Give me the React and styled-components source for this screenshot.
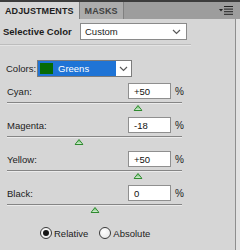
import React from "react";
import styled, { createGlobalStyle } from "styled-components";

const GlobalStyle = createGlobalStyle`
  html, body {
    margin: 0;
    padding: 0;
    background: #d6d6d6;
  }
  body {
    font-family: "Liberation Sans", Arial, sans-serif;
    color: #1c1c1c;
  }
`;

const Panel = styled.div`
  width: 240px;
  height: 250px;
  display: flex;
  flex-direction: column;
  background: #d6d6d6;
  overflow: hidden;
`;

const TabBar = styled.div`
  height: 17px;
  border-top: 2px solid #3c3c3c;
  background: #9d9d9d;
  display: flex;
  align-items: stretch;
`;

const Tab = styled.div`
  display: flex;
  align-items: center;
  padding: 0 5px;
  font-size: 9px;
  font-weight: bold;
  letter-spacing: 0.1px;
  background: ${(p) => (p.$active ? "#d6d6d6" : "#acacac")};
  color: ${(p) => (p.$active ? "#1e1e1e" : "#404040")};
  border-right: 1px solid #808080;
`;

const MenuButton = styled.div`
  margin-left: auto;
  margin-right: 7px;
  display: flex;
  align-items: center;
`;

const Body = styled.div`
  flex: 1;
  display: flex;
`;

const Content = styled.div`
  width: 235px;
  display: flex;
  flex-direction: column;
`;

const RightEdge = styled.div`
  flex: 1;
  border-left: 1px solid #8e8e8e;
  background: #e2e2e2;
`;

const HeaderRow = styled.div`
  display: flex;
  align-items: center;
  margin-top: 4px;
  height: 17px;
  padding-left: 3px;
`;

const Title = styled.div`
  width: 77px;
  font-size: 9.5px;
  font-weight: bold;
`;

const Dropdown = styled.div`
  box-sizing: border-box;
  width: ${(p) => p.$width}px;
  height: 17px;
  border: 1px solid #8a8a8a;
  background: #fff;
  display: flex;
  align-items: center;
  justify-content: space-between;
  padding: 0 5px 0 4px;
  font-size: 9.5px;
`;

const Divider = styled.div`
  margin-top: 4px;
  width: 191px;
  border-top: 1px solid #bdbdbd;
  border-bottom: 1px solid #e4e4e4;
`;

const ColorsRow = styled.div`
  display: flex;
  align-items: center;
  margin-top: 14px;
  height: 17px;
  padding-left: 6px;
`;

const Label = styled.div`
  font-size: 9.5px;
  width: ${(p) => p.$width}px;
  flex: none;
`;

const ColorSelect = styled.div`
  box-sizing: border-box;
  width: 95px;
  height: 17px;
  border: 1px solid #7c7c7c;
  background: #fff;
  display: flex;
  align-items: stretch;
`;

const Highlight = styled.div`
  flex: 1;
  background: #1f74d6;
  display: flex;
  align-items: center;
  padding: 2px;
  color: #fff;
  font-size: 9.5px;
`;

const Swatch = styled.div`
  width: 13px;
  align-self: stretch;
  background: #066b06;
  margin-right: 5px;
`;

const Chevron = styled.div`
  width: 15px;
  display: flex;
  align-items: center;
  justify-content: center;
`;

const Channels = styled.div`
  margin-top: 6px;
  display: flex;
  flex-direction: column;
`;

const ChannelGroup = styled.div`
  height: 34px;
  padding-left: 7px;
`;

const LabelRow = styled.div`
  display: flex;
  align-items: center;
  height: 16px;
`;

const ValueInput = styled.div`
  box-sizing: border-box;
  width: 43px;
  height: 16px;
  border: 1px solid #8f8f8f;
  background: #fff;
  display: flex;
  align-items: center;
  padding-left: 5px;
  font-size: 9.5px;
  color: #111;
`;

const Percent = styled.div`
  margin-left: 4px;
  font-size: 10px;
`;

const Track = styled.div`
  position: relative;
  margin-top: 3px;
  width: 175px;
  border-top: 1px solid #858585;
  border-bottom: 1px solid #ebebeb;
`;

const Thumb = styled.svg`
  position: absolute;
  top: 2px;
  transform: translateX(-50%);
`;

const RadioRow = styled.div`
  height: 28px;
  display: flex;
  align-items: center;
  padding-left: 40px;
`;

const RadioItem = styled.div`
  display: flex;
  align-items: center;
  margin-right: 11px;
  font-size: 9.5px;
`;

const RadioCircle = styled.div`
  box-sizing: border-box;
  width: 12px;
  height: 12px;
  border-radius: 50%;
  border: 1px solid #3a3a3a;
  background: radial-gradient(circle at 40% 35%, #ffffff, #e4e4e4);
  display: flex;
  align-items: center;
  justify-content: center;
  margin-right: 2px;

  &::after {
    content: "";
    width: 6px;
    height: 6px;
    border-radius: 50%;
    background: ${(p) => (p.$checked ? "#161616" : "transparent")};
  }
`;

const channels = [
  { name: "Cyan", value: "+50", num: 50 },
  { name: "Magenta", value: "-18", num: -18 },
  { name: "Yellow", value: "+50", num: 50 },
  { name: "Black", value: "0", num: 0 },
];

const ChevronIcon = () => (
  <svg width="9" height="6" viewBox="0 0 9 6">
    <path d="M1 1 L4.5 4.5 L8 1" fill="none" stroke="#5a5a5a" strokeWidth="1.2" />
  </svg>
);

const ThumbIcon = ({ left }) => (
  <Thumb width="9" height="6" viewBox="0 0 9 6" style={{ left: `${left}%` }}>
    <defs>
      <linearGradient id="thumbFill" x1="0" y1="0" x2="0" y2="1">
        <stop offset="0" stopColor="#4fb34f" />
        <stop offset="1" stopColor="#e6f5e6" />
      </linearGradient>
    </defs>
    <polygon points="4.5,0.5 8.5,5.5 0.5,5.5" fill="url(#thumbFill)" stroke="#2f8a2f" strokeWidth="1" />
  </Thumb>
);

export default function App() {
  return (
    <>
      <GlobalStyle />
      <Panel>
        <TabBar>
          <Tab $active>ADJUSTMENTS</Tab>
          <Tab>MASKS</Tab>
          <MenuButton>
            <svg width="14" height="9" viewBox="0 0 14 9">
              <polygon points="0,3 4,3 2,5.5" fill="#222" />
              <rect x="5" y="0" width="9" height="1" fill="#222" />
              <rect x="5" y="2.6" width="9" height="1" fill="#222" />
              <rect x="5" y="5.2" width="9" height="1" fill="#222" />
              <rect x="5" y="7.8" width="9" height="1" fill="#222" />
            </svg>
          </MenuButton>
        </TabBar>
        <Body>
          <Content>
            <HeaderRow>
              <Title>Selective Color</Title>
              <Dropdown $width={107}>
                <span>Custom</span>
                <ChevronIcon />
              </Dropdown>
            </HeaderRow>
            <Divider />
            <ColorsRow>
              <Label $width={31}>Colors:</Label>
              <ColorSelect>
                <Highlight>
                  <Swatch />
                  Greens
                </Highlight>
                <Chevron>
                  <ChevronIcon />
                </Chevron>
              </ColorSelect>
            </ColorsRow>
            <Channels>
              {channels.map((c) => (
                <ChannelGroup key={c.name}>
                  <LabelRow>
                    <Label $width={121}>{c.name}:</Label>
                    <ValueInput>{c.value}</ValueInput>
                    <Percent>%</Percent>
                  </LabelRow>
                  <Track>
                    <ThumbIcon left={((c.num + 100) / 200) * 100} />
                  </Track>
                </ChannelGroup>
              ))}
            </Channels>
            <RadioRow>
              <RadioItem>
                <RadioCircle $checked />
                Relative
              </RadioItem>
              <RadioItem>
                <RadioCircle />
                Absolute
              </RadioItem>
            </RadioRow>
          </Content>
          <RightEdge />
        </Body>
      </Panel>
    </>
  );
}
